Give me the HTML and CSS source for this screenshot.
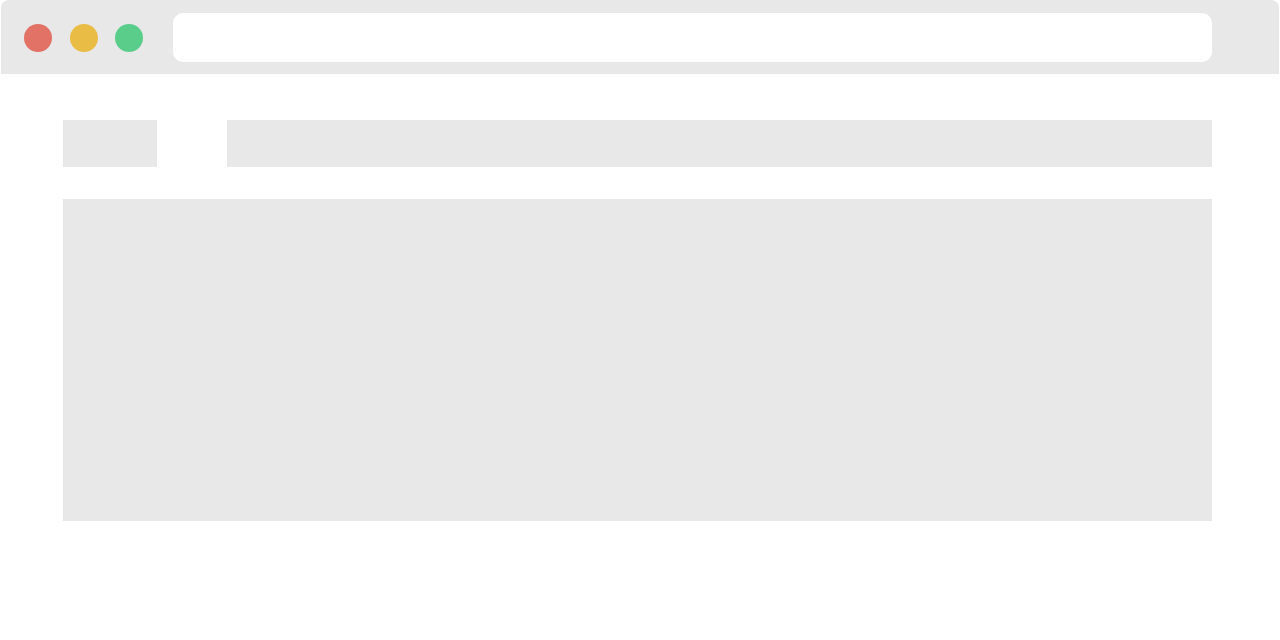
FILE: index.html
```html
<!DOCTYPE html>
<html lang="en">
  <head>
    <meta charset="UTF-8" />
    <meta name="viewport" content="width=device-width, initial-scale=1.0" />
    <title>Browser Placeholder</title>
    <link rel="stylesheet" href="styles.css">
  </head>
  <body>
    <div class="window">
      <div class="toolbar">
        <div class="dots">
          <span class="dot red"></span>
          <span class="dot yellow"></span>
          <span class="dot green"></span>
        </div>
        <div class="address-bar"></div>
      </div>
      <div class="page">
        <div class="nav-row">
          <div class="logo-block"></div>
          <div class="menu-block"></div>
        </div>
        <div class="hero-block"></div>
      </div>
    </div>
  </body>
</html>
```

FILE: styles.css
```css
* {
  margin: 0;
  padding: 0;
  box-sizing: border-box;
}
body {
  font-family: "Liberation Sans", Arial, sans-serif;
  background-color: #fff;
  width: 1280px;
  height: 640px;
  overflow: hidden;
}
.window {
  width: 100%;
  height: 100%;
}
.toolbar {
  display: flex;
  align-items: center;
  height: 74px;
  margin: 0 1px 0 1px;
  padding: 0 67px 0 23px;
  background-color: #e8e8e8;
  border-radius: 8px 8px 0 0;
}
.dots {
  display: flex;
  gap: 18px;
  margin-top: 1px;
}
.dot {
  display: block;
  width: 28px;
  height: 28px;
  border-radius: 50%;
}
.dot.red {
  background-color: #e27166;
}
.dot.yellow {
  background-color: #e9bc46;
}
.dot.green {
  margin-left: -1px;
  background-color: #5acd8b;
}
.address-bar {
  flex: 1;
  height: 49px;
  margin-left: 30px;
  margin-top: 1px;
  background-color: #fff;
  border-radius: 10px;
}
.page {
  padding: 46px 68px 0 63px;
}
.nav-row {
  display: flex;
  gap: 70px;
  height: 47px;
}
.logo-block {
  width: 94px;
  background-color: #e8e8e8;
}
.menu-block {
  flex: 1;
  background-color: #e8e8e8;
}
.hero-block {
  height: 322px;
  margin-top: 32px;
  background-color: #e8e8e8;
}
```
